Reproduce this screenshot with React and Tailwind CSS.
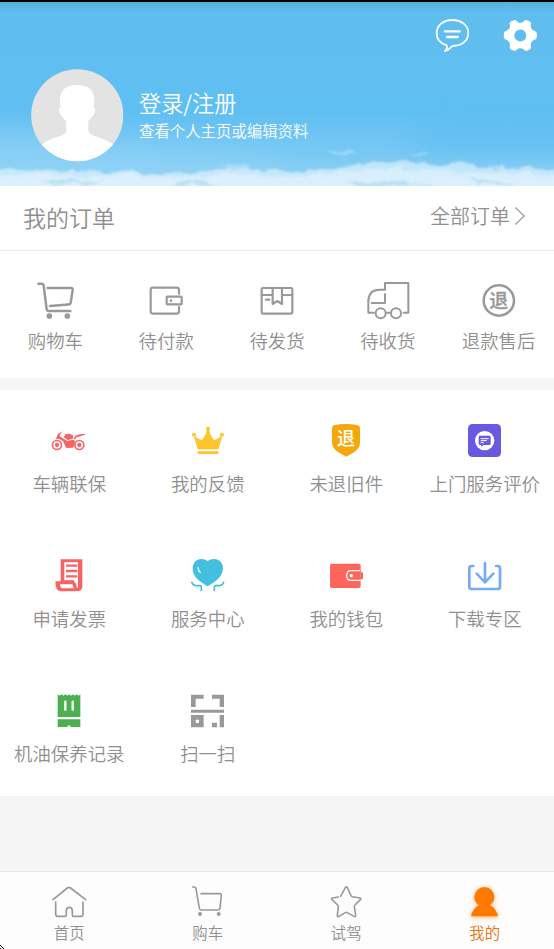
import { useState } from 'react'

const GRAY = '#999999'

function Icon({ box, children, stroke = GRAY, width = 6.5 }) {
  return (
    <svg
      viewBox={`${box} 144 144`}
      className="block size-12 shrink-0 overflow-visible"
      fill="none"
      stroke={stroke}
      strokeWidth={width}
      strokeLinecap="round"
      strokeLinejoin="round"
    >
      {children}
    </svg>
  )
}

const CartIcon = () => (
  <Icon box="92 270" width={7.5}>
    <path d="M114 293 H123 Q129 293 130 299 L139 370 Q140 375 145 375 H210" />
    <path d="M142 306 H212 Q218 306 217 312 L211 350 Q210 355 205 355.500 L149 360" />
    <circle cx="147" cy="390" r="8.500" fill={GRAY} stroke="none" />
    <circle cx="201" cy="390" r="8.500" fill={GRAY} stroke="none" />
  </Icon>
)

const PayIcon = () => (
  <Icon box="427 270">
    <path d="M538 323 V312 Q538 305 531 305 H460 Q453 305 453 312 V376 Q453 383 460 383 H531 Q538 383 538 376 V363" />
    <rect x="501" y="332" width="45" height="23" rx="2" />
    <circle cx="514" cy="344" r="4" fill={GRAY} stroke="none" />
  </Icon>
)

const BoxIcon = () => (
  <Icon box="759 270">
    <rect x="785" y="306" width="92" height="77" rx="4" />
    <path d="M785 327 H818 M846 327 H877 M818 306 V354 L832 345 L846 354 V306" />
    <path d="M798 341 H808" />
  </Icon>
)

const TruckIcon = () => (
  <Icon box="260 270" width={6}>
    <path d="M290 380 H273 V343 Q275 312 306 311 H323 V291 H393 V380 H379" />
    <path d="M323 324 V351 H283 M328 380 H340" />
    <circle cx="310" cy="382" r="15" />
    <circle cx="356" cy="382" r="15" />
  </Icon>
)

const RefundIcon = () => (
  <Icon box="593 270" width={7.5}>
    <circle cx="664.500" cy="343.500" r="45.500" />
    <text x="664.500" y="365" textAnchor="middle" fontSize="57" fontWeight="500" fill={GRAY} stroke={GRAY} strokeWidth="1">退</text>
  </Icon>
)

const MotorIcon = () => (
  <Icon box="136 48" stroke="none">
    <g fill="none" stroke="#fa6363">
      <circle cx="172" cy="135" r="13.500" strokeWidth="5" />
      <circle cx="239" cy="135" r="13.500" strokeWidth="5" />
    </g>
    <g fill="#fa6363">
      <circle cx="172" cy="135" r="6.500" />
      <circle cx="239" cy="135" r="6.500" />
      <path d="M170 113 L175 101 L189 94 L180 104 L182 110 L190 115 L202 123 L222 119 L226 124 L221 143 L200 144 L190 124 Q182 114 166 117 Z" />
      <path d="M193 110 L198 102 L210 101 L221 107 L220 116 L204 120 L192 112 Z" />
      <path d="M222 115 Q228 105 241 103 L261 101 L243 109 L231 112 L225 119 Z" />
    </g>
  </Icon>
)

const CrownIcon = () => (
  <Icon box="552 48" stroke="none">
    <g fill="#ffc42d">
      <path d="M581 106 Q596 118 605 121 Q616 110 621 91 H627 Q632 110 643 121 Q652 118 667 106 L656 148 H593 Z" />
      <circle cx="624" cy="87" r="6.500" />
      <circle cx="582" cy="104" r="6" />
      <circle cx="666" cy="104" r="6" />
      <rect x="592" y="154" width="64" height="8" rx="4" />
    </g>
  </Icon>
)

const ShieldIcon = () => (
  <Icon box="135 48" stroke="none">
    <path d="M165 84 Q165 78 171 76 Q208 68 243 76 Q249 78 249 84 V127 C249 150 228 159 208 170 C188 159 165 150 165 127 Z" fill="#f5a80b" />
    <text x="207" y="136" textAnchor="middle" fontSize="54" fontWeight="500" fill="#fff">退</text>
  </Icon>
)

const ReviewIcon = () => (
  <Icon box="552 48" stroke="none">
    <rect x="573" y="72" width="99" height="99" rx="13" fill="#6959e0" />
    <circle cx="623" cy="122" r="29" fill="#fff" />
    <path d="M610 107 H637 Q641 107 641 111 V131 Q641 135 637 135 H620 L612 140 V135 H610 Q605 135 605 131 V111 Q605 107 610 107 Z" fill="#6959e0" />
    <path d="M612 116 H634 M612 122 H628 M612 128 H619" stroke="#fff" strokeWidth="3" />
  </Icon>
)

const InvoiceIcon = () => (
  <Icon box="134 35" stroke="none">
    <path d="M181 60 H246 V141 Q246 155 231 156 H181 Q165 155 165 126 H181 Z" fill="#f36565" />
    <path d="M192 69 H233 V145 H230 Q229 132 221 126 H192 Z" fill="#fff" />
    <path d="M179 135 H216 L220 147 H184 Q179 145 179 135 Z" fill="#fff" />
    <path d="M197 79 H231 M197 95 H231 M197 111 H231" stroke="#f36565" strokeWidth="7" strokeLinecap="butt" />
    <path d="M190 126 H221" stroke="#f36565" strokeWidth="7" strokeLinecap="butt" />
  </Icon>
)

const HeartIcon = () => (
  <Icon box="552 35" stroke="#43bfdf" width={5}>
    <path d="M623 65 C607 53 579 58 578 86 C577 116 606 130 623 141 C640 130 669 116 669 86 C668 58 639 53 623 65 Z" fill="#43bfdf" stroke="none" />
    <path d="M594 85 Q595 94 601 100" stroke="#fff" strokeWidth="3.500" />
    <path d="M575 127 Q577 139 590 139 H600 Q604 139 604 143 V156 M671 127 Q669 139 656 139 H647 Q643 139 643 143 V156" strokeLinecap="butt" />
  </Icon>
)

const WalletIcon = () => (
  <Icon box="135 33" stroke="none">
    <rect x="159" y="71" width="92" height="73" rx="6" fill="#ff665b" />
    <path d="M251 92 H223 Q209 92 209 107 Q209 121 223 121 H251" stroke="#fff" strokeWidth="4" strokeLinecap="butt" />
    <path d="M250 97 V90 H252 V97 H255 Q258 97 258 100 V115 Q258 118 255 118 H250 Z" fill="#ff665b" />
    <circle cx="223" cy="107" r="5" fill="#fff" />
  </Icon>
)

const DownloadIcon = () => (
  <Icon box="552 33" stroke="#76acf5" width={8}>
    <path d="M589 78 H584 Q577 78 577 85 V141 Q577 147 584 147 H662 Q669 147 669 141 V85 Q669 78 662 78 H657" />
    <path d="M624 69 V127 M599 101 L624 127 L649 101" />
  </Icon>
)

const OilIcon = () => (
  <Icon box="136 20" stroke="none">
    <path d="M174 45 L180 49 L186 45 L191 49 L197 45 L203 49 L208 45 L214 49 L220 45 L225 49 L231 45 L237 49 L242 45 V113 H174 Z M174 120 H242 V143 H214 Q208 133 202 143 H174 Z" fill="#4caf50" />
    <path d="M197 67 V91 M219 67 V91" stroke="#fff" strokeWidth="7" />
  </Icon>
)

const ScanIcon = () => (
  <Icon box="552 19" stroke="none">
    <path fill={GRAY} fillRule="evenodd" d="M573 45 H611 V57 H587 V82 H573 Z M636 45 H672 V82 H659 V57 H636 Z M573 90 H672 V99 H573 Z M573 106 H611 V143 H573 Z M587 120 V130 H597 V120 Z M659 106 H672 V143 H659 Z M636 129 H651 V143 H636 Z" />
  </Icon>
)

const HomeTab = () => (
  <Icon box="136 53" width={5}>
    <path d="M160 118 L203 83 Q208 79 213 83 L258 118" />
    <path d="M168 125 V161 Q168 168 175 168 H197 Q200 168 200 165 V150 Q201 141 209 141 Q217 141 218 150 V165 Q218 168 221 168 H243 Q250 168 250 161 V125" />
  </Icon>
)

const CartTab = () => (
  <Icon box="552 53" width={4.8}>
    <path d="M578 80 H583 Q587 80 588 85 L598 144 Q599 149 604 149 H654 Q659 149 660 144 L664 106 Q665 100 659 100 H603" />
    <circle cx="600" cy="161" r="6" fill={GRAY} stroke="none" />
    <circle cx="656" cy="161" r="6" fill={GRAY} stroke="none" />
  </Icon>
)

const StarTab = () => (
  <Icon box="135 53" width={4.8}>
    <path d="M191 108 L205 82 Q208 77 211 82 L222 106 Q223 108 226 109 L249 113 Q254 114 250 118 L234 134 Q232 136 232 139 L236 165 Q236 171 231 168 L211 157 Q208 155 205 157 L186 168 Q180 171 181 165 L184 139 Q184 136 182 134 L165 118 Q161 114 166 113 L184 110" />
  </Icon>
)

const MineTab = () => (
  <Icon box="552 53" stroke="none">
    <g fill="#ff7800" className="drop-shadow-[0_3px_8px_rgba(255,120,0,0.6)]">
      <circle cx="622" cy="110" r="30" />
      <path d="M582 168 Q587 143 608 134 H637 Q658 143 663 168 Z" />
    </g>
  </Icon>
)

const ORDERS = [
  { label: '购物车', icon: CartIcon },
  { label: '待付款', icon: PayIcon },
  { label: '待发货', icon: BoxIcon },
  { label: '待收货', icon: TruckIcon },
  { label: '退款售后', icon: RefundIcon },
]

const SERVICES = [
  { label: '车辆联保', icon: MotorIcon },
  { label: '我的反馈', icon: CrownIcon },
  { label: '未退旧件', icon: ShieldIcon },
  { label: '上门服务评价', icon: ReviewIcon },
  { label: '申请发票', icon: InvoiceIcon },
  { label: '服务中心', icon: HeartIcon },
  { label: '我的钱包', icon: WalletIcon },
  { label: '下载专区', icon: DownloadIcon },
  { label: '机油保养记录', icon: OilIcon },
  { label: '扫一扫', icon: ScanIcon },
]

const TABS = [
  { label: '首页', icon: HomeTab },
  { label: '购车', icon: CartTab },
  { label: '试驾', icon: StarTab },
  { label: '我的', icon: MineTab },
]

function Sky() {
  return (
    <svg className="absolute inset-0 size-full" viewBox="0 0 554 184" preserveAspectRatio="none">
      <defs>
        <linearGradient id="sky" x1="0" y1="0" x2="0" y2="1">
          <stop offset="0" stopColor="#58afdd" />
          <stop offset="0.06" stopColor="#60bdee" />
          <stop offset="0.6" stopColor="#60bff2" />
          <stop offset="0.85" stopColor="#7ccaf4" />
          <stop offset="1" stopColor="#98d4f6" />
        </linearGradient>
        <filter id="puff" x="-5%" y="-50%" width="110%" height="200%" colorInterpolationFilters="sRGB">
          <feTurbulence type="fractalNoise" baseFrequency="0.05 0.12" numOctaves="4" seed="8" />
          <feDisplacementMap in="SourceGraphic" scale="11" xChannelSelector="R" yChannelSelector="G" />
          <feGaussianBlur stdDeviation="1.2" />
        </filter>
        <filter id="haze" filterUnits="userSpaceOnUse" x="-100" y="0" width="760" height="260" colorInterpolationFilters="sRGB">
          <feGaussianBlur stdDeviation="14" />
        </filter>
      </defs>
      <rect width="554" height="184" fill="url(#sky)" />
      <path d="M-60 122 L120 138 L280 158 L280 175 H-60 Z" fill="#a8dbf9" opacity="0.35" filter="url(#haze)" />
      <path d="M430 128 H620 V148 H400 Z" fill="#4fb6ed" opacity="0.6" filter="url(#haze)" />
      <g filter="url(#puff)" fill="#fff">
        <path d="M-20 169 L20 168 L55 170 L90 168 L125 171 L170 171 L210 169 L235 166 L275 169 L310 169 L345 165 L375 160 L410 159 L440 163 L460 160 L480 166 L520 166 L580 169 V200 H-20 Z" opacity="0.5" />
        <path d="M-20 176 L40 172 L80 176 L120 172 L170 176 L230 172 L290 175 L350 170 L400 165 L430 169 L470 171 L520 171 L580 175 V200 H-20 Z" opacity="0.3" />
        <path d="M322 151 L352 149 L358 150 L336 152 Z M408 153 L425 152 L428 154 Z M335 164 L350 163 L356 165 Z M216 163 L240 161 L258 163 L238 165 Z" opacity="0.35" />
      </g>
      <g filter="url(#puff)" fill="#68bdea" opacity="0.3">
        <path d="M40 178 L110 180 L60 183 Z M190 179 L225 182 L170 184 Z M345 181 L400 178 L440 183 L360 186 Z M470 177 L520 182 L480 183 Z" />
      </g>
    </svg>
  )
}

function Header() {
  return (
    <header className="relative h-[186px] shrink-0 overflow-hidden border-t-2 border-black text-white">
      <Sky />
      <div className="relative flex h-[66px] justify-end gap-[34px] pr-[17px] pt-4">
        <svg className="h-[35px] w-[34px]" viewBox="474 54 102 105" fill="none" stroke="#fff" strokeLinecap="round" strokeLinejoin="round">
          <path d="M509 136 Q512 147 504 153 Q517 149 526 138 C556 137 574 121 574 99 C574 76 553 60 526 60 C499 60 479 76 479 99 C479 116 490 130 509 136 Z" strokeWidth="5.500" />
          <path d="M504 94 H548 M510 111 H542" strokeWidth="7" />
        </svg>
        <svg className="h-[35px] w-[34px]" viewBox="678 54 102 105" fill="#fff" stroke="#fff" strokeLinejoin="round">
          <path
            fillRule="evenodd"
            strokeWidth="5"
            d="M700 71 Q701 68 704 66 L712 63 Q715 62 718 66 Q722 71 730 71 Q738 71 742 66 Q745 62 748 63 L756 66 Q759 68 760 71 Q757 78 760 85 Q765 94 774 96 Q777 97 777 101 V111 Q777 115 774 116 Q765 118 760 127 Q757 134 760 142 Q759 145 756 147 L748 150 Q745 151 742 147 Q738 142 730 142 Q722 142 718 147 Q715 151 712 150 L704 147 Q701 145 700 142 Q703 134 700 127 Q695 118 686 116 Q683 115 683 111 V101 Q683 97 686 96 Q695 94 700 85 Q703 78 700 71 Z M730 86 A20.500 20.500 0 1 0 730 127 A20.500 20.500 0 1 0 730 86 Z"
          />
        </svg>
      </div>
      <div className="relative flex pl-[31px]">
        <svg className="mt-px size-[92.5px]" viewBox="92 207 278 278">
          <clipPath id="avatar"><circle cx="231" cy="346" r="138.500" /></clipPath>
          <g clipPath="url(#avatar)">
            <rect x="92" y="207" width="278" height="278" fill="#e3e3e3" />
            <path d="M181 323 C172 275 192 255 230 255 C269 255 290 275 280 323 Q288 322 284 337 Q281 350 276 347 Q274 356 264 364 V392 Q266 402 282 408 Q319 418 340 435 V490 H122 V435 Q143 418 181 408 Q197 402 198 392 V364 Q188 357 185 347 Q180 350 177 337 Q174 322 181 323 Z" fill="#fff" />
          </g>
        </svg>
        <div className="ml-[15.5px] pt-[19px]">
          <div className="text-[22.2px] leading-[30px]">登录/注册</div>
          <div className="text-[15.4px] leading-[26px]">查看个人主页或编辑资料</div>
        </div>
      </div>
    </header>
  )
}

export default function App() {
  const [tab, setTab] = useState('我的')

  return (
    <div className="relative flex h-[949px] w-[554px] flex-col overflow-hidden bg-[#f5f5f5] font-['Noto_Sans_CJK_SC',sans-serif] font-[350] text-[#8f8f8f]">
      <Header />

      {/* Orders */}
      <section className="h-[192px] shrink-0 bg-white">
        <div className="flex h-[65px] items-center justify-between border-b border-[#e9e9f0] pl-[23px] pr-[29px]">
          <h2 className="pb-[2px] text-[23px]">我的订单</h2>
          <button className="flex items-center gap-[5px] pb-[5px] text-[20px]">
            全部订单
            <svg className="h-[18px] w-[10px]" viewBox="0 0 10 18" fill="none" stroke={GRAY} strokeWidth="1.300">
              <path d="M0.500 0.500 L9 9 L0.500 17.500" />
            </svg>
          </button>
        </div>
        <div className="grid grid-cols-5 pt-[25px]">
          {ORDERS.map(({ label, icon: Glyph }) => (
            <button key={label} className="flex flex-col items-center">
              <Glyph />
              <span className="mt-[3px] whitespace-nowrap text-[18.4px] leading-[26px]">{label}</span>
            </button>
          ))}
        </div>
      </section>

      {/* Services */}
      <section className="mt-3 grid h-[406px] shrink-0 auto-rows-[135px] grid-cols-4 bg-white pt-[26px]">
        {SERVICES.map(({ label, icon: Glyph }) => (
          <button key={label} className="flex flex-col items-center">
            <Glyph />
            <span className="mt-1.5 whitespace-nowrap text-[18.4px] leading-[26px]">{label}</span>
          </button>
        ))}
      </section>

      {/* Tab bar */}
      <nav className="mt-auto grid h-[78px] shrink-0 grid-cols-4 border-t border-[#e8e8e8] bg-[#fdfdfd] pt-[6px]">
        {TABS.map(({ label, icon: Glyph }) => (
          <button
            key={label}
            onClick={() => setTab(label)}
            className={`flex flex-col items-center ${tab === label ? 'text-[#e8730c]' : ''}`}
          >
            <Glyph />
            <span className="-mt-[5px] text-[15.4px] leading-[22px]">{label}</span>
          </button>
        ))}
      </nav>

      {/* Pointer tip */}
      <svg className="absolute bottom-0 left-0 size-1" viewBox="0 0 4 4" shapeRendering="crispEdges">
        <path d="M0 0h1v1h-1z M1 1h1v1h-1z M2 2h1v1h-1z M3 3h1v1h-1z M0 3h1v1h-1z" />
      </svg>
    </div>
  )
}
